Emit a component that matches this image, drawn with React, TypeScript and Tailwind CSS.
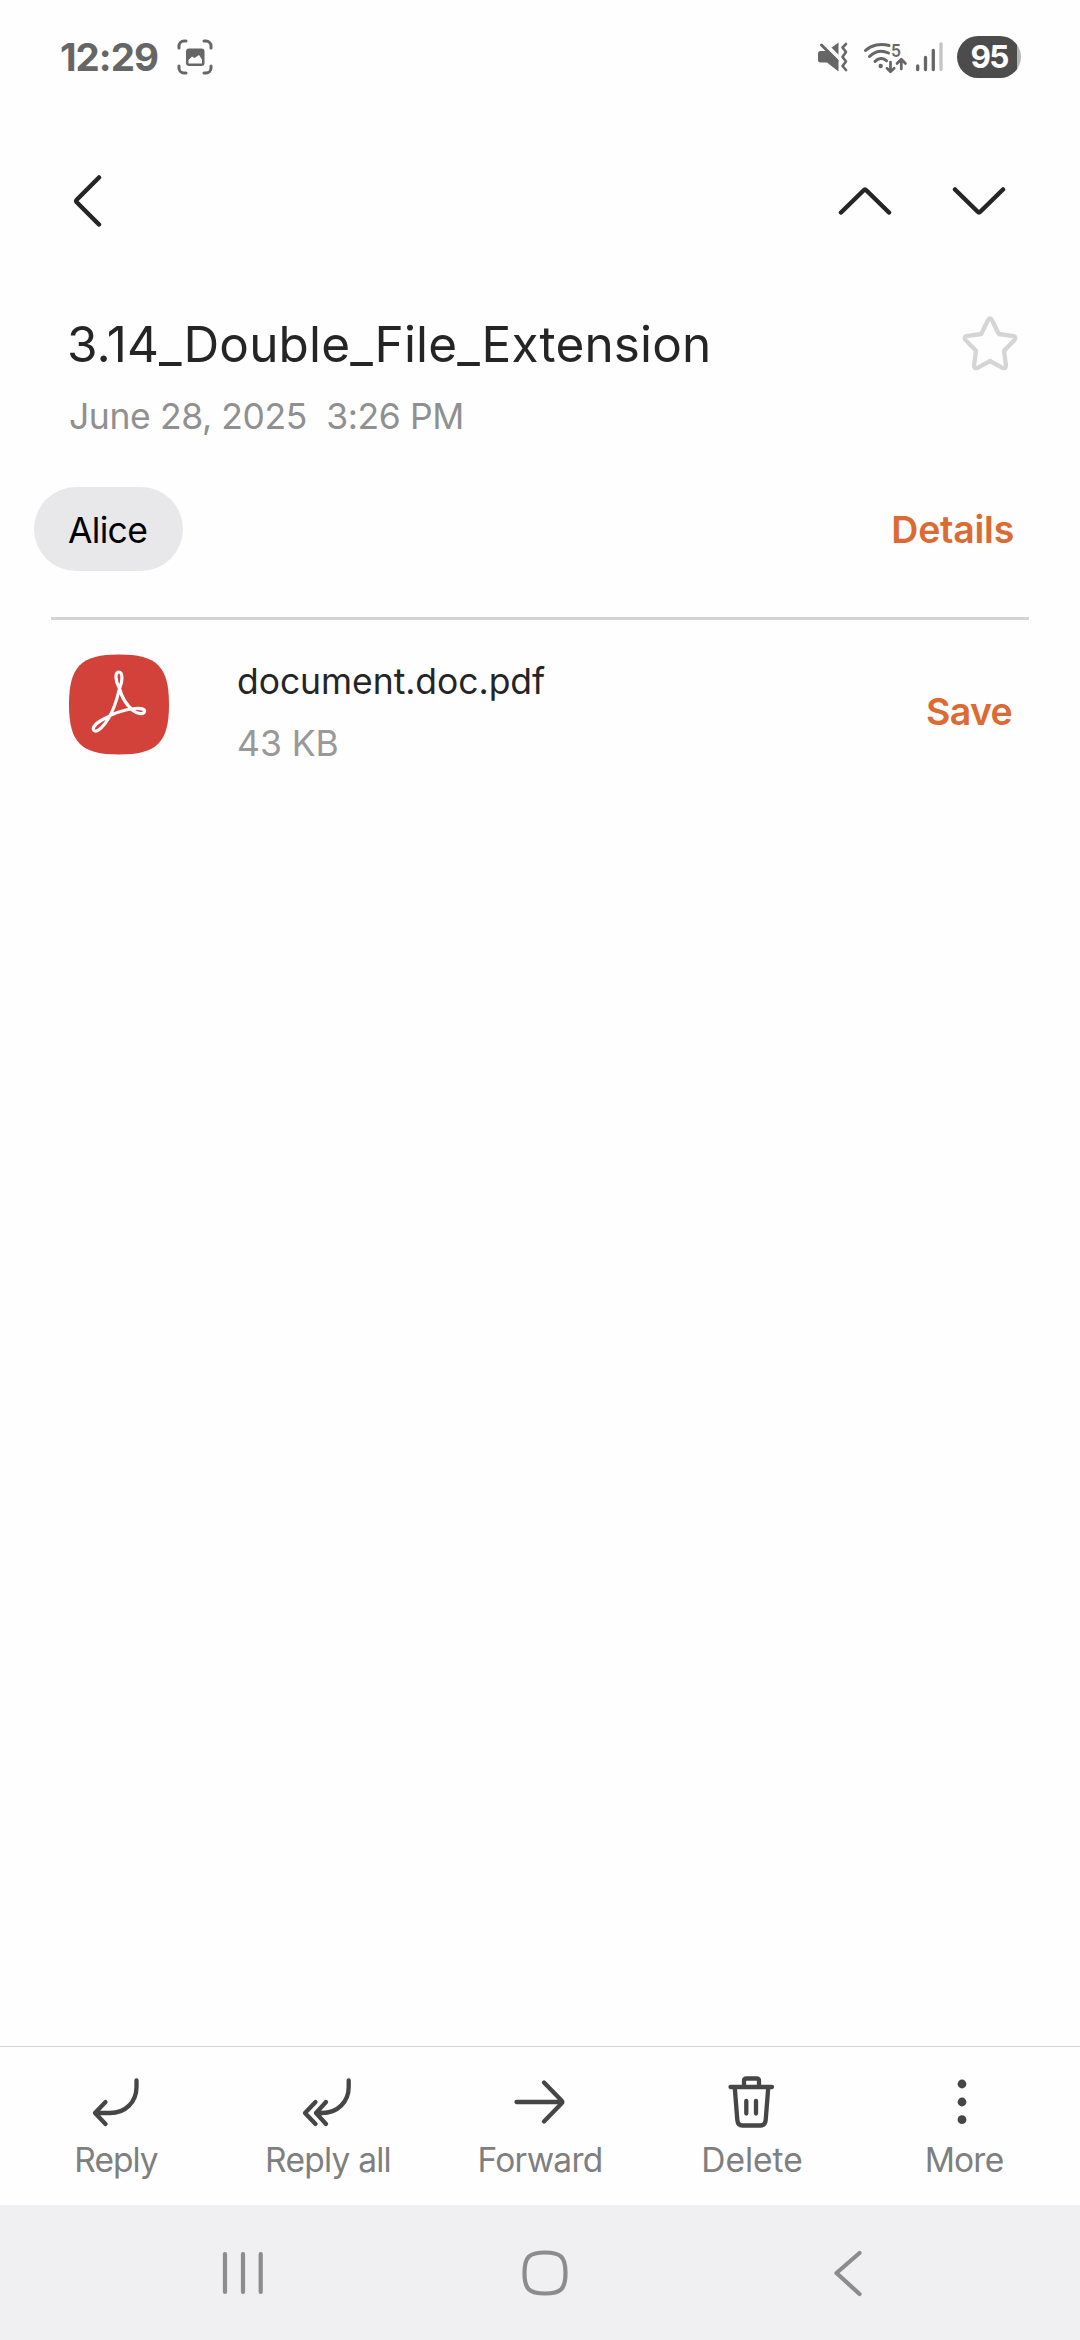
import type { ReactNode } from 'react';

function StatusBar() {
  return (
    <div className="flex h-[114px] items-center pr-[59px] pl-[60px] text-[#666666]">
      <span className="w-[117px] text-[38.5px] leading-none font-bold tracking-[-1px]">12:29</span>
      <svg width="36" height="36" viewBox="0 0 36 36" fill="none">
        <path
          d="M2 9V7a5 5 0 0 1 5-5h2M27 2h2a5 5 0 0 1 5 5v2M34 27v2a5 5 0 0 1-5 5h-2M9 34H7a5 5 0 0 1-5-5v-2"
          stroke="currentColor"
          strokeWidth="3"
          strokeLinecap="round"
        />
        <rect x="9" y="9.5" width="18.5" height="17.5" rx="3" fill="currentColor" />
        <path d="M11.5 24.5v-3.5l3.5-3.5 2.5 1.5 4.5-3 3 4.5v4z" fill="#fefefe" />
      </svg>
      <div className="ml-auto flex items-center">
        <svg width="34" height="34" viewBox="816 40 34 34" fill="none" className="mr-3">
          <path d="M820.5 51H827L838.5 42.5V71.5L827 62.5H820.5Q818 62.5 818 60V53.5Q818 51 820.5 51Z" fill="currentColor" />
          <path d="M821 40L840 59" stroke="#fefefe" strokeWidth="4" />
          <path d="M821.5 45L837 60.5" stroke="currentColor" strokeWidth="3" strokeLinecap="round" />
          <path
            d="M846 44l-3.5 3.5 3.5 4.5-3.5 5 3.5 4.5-3.5 4.5 3.5 4"
            stroke="currentColor"
            strokeWidth="2.6"
            strokeLinecap="round"
            strokeLinejoin="round"
          />
        </svg>
        <svg width="46" height="34" viewBox="862 40 46 34" fill="none" className="mr-[7px]">
          <g stroke="currentColor" strokeWidth="3" strokeLinecap="round" strokeLinejoin="round">
            <path d="M865.5 50.5C871 45 881 43 889 45.5" />
            <path d="M869.5 56.5C875 51 882 50 888.5 53" />
            <path d="M875 61.5C878 58 883.5 57.5 886.5 60.8" />
            <path d="M890.5 62V71.5M887 68.3L890.5 71.8L894.2 68.3" strokeWidth="2.7" />
            <path d="M901.3 69V59.5M897 63.5L901.3 59.2L905.5 63.5" strokeWidth="2.7" />
          </g>
          <circle cx="880.7" cy="66" r="2.2" fill="currentColor" />
          <text x="891" y="56.5" fontSize="17.5" fontWeight="600" textLength="10" lengthAdjust="spacingAndGlyphs" fill="currentColor">
            5
          </text>
        </svg>
        <svg width="29" height="34" viewBox="915 40 29 34" fill="none" className="mr-[13px]" strokeWidth="3.3" strokeLinecap="round">
          <path d="M917.7 66V69.5M925.5 57.5V69.5M933.3 50.5V69.5" stroke="currentColor" />
          <path d="M941 43.8V69.5" stroke="#c4c4c4" />
        </svg>
        <div className="flex h-[42px] w-16 items-center justify-center rounded-full bg-[linear-gradient(to_right,#4c4c4c_60px,#b5b5b5_60px)]">
          <span className="text-[31.5px] leading-none font-bold tracking-[-1.8px] text-white">95</span>
        </div>
      </div>
    </div>
  );
}

function Chevron({ d, w, h, className }: { d: string; w: number; h: number; className?: string }) {
  return (
    <svg
      width={w}
      height={h}
      viewBox={`0 0 ${w} ${h}`}
      fill="none"
      stroke="#252525"
      strokeWidth="4.5"
      strokeLinecap="round"
      strokeLinejoin="round"
      className={className}
    >
      <path d={d} />
    </svg>
  );
}

function TopNav() {
  return (
    <div className="flex h-[174px] items-center pr-[74px] pl-[72px]">
      <Chevron w={30} h={54} d="M27 3.5L5 25.5Q3.5 27 5 28.5L27 50.5" />
      <Chevron w={54} h={30} d="M3 26.5L25.5 4.5Q27 3 28.5 4.5L51 26.5" className="ml-auto" />
      <Chevron w={54} h={30} d="M3 3.5L25.5 25.5Q27 27 28.5 25.5L51 3.5" className="ml-[60px]" />
    </div>
  );
}

function AcrobatIcon() {
  return (
    <svg width="100" height="101" viewBox="0 0 100 100" fill="none" className="ml-[0.5px]">
      <path d="M50 0C88 0 100 12 100 50S88 100 50 100S0 88 0 50S12 0 50 0Z" fill="#d3423a" />
      <path
        d="M50.5 34C45.8 26 46 17.5 49.8 17.5C53.8 17.5 54 26 50.5 34C48 45 43 58 40 63C35 72 29 77 26 76.5C22 75.5 25 70 32 66C42 60 54 55 66 54C72 53.5 76 54.5 75.5 57C75 60 69 60 64 56C57 50 52.5 42 50.5 34Z"
        stroke="#fff"
        strokeWidth="3.2"
        strokeLinejoin="round"
      />
    </svg>
  );
}

function Action({ label, tracking, children }: { label: string; tracking: string; children: ReactNode }) {
  return (
    <div className="flex w-[212px] flex-col items-center pt-6">
      <svg
        width="60"
        height="60"
        viewBox="0 0 60 60"
        fill="none"
        stroke="#464646"
        strokeWidth="4.3"
        strokeLinecap="round"
        strokeLinejoin="round"
      >
        {children}
      </svg>
      <span className={`mt-[9px] text-[33.5px] leading-10 text-[#7f7f7f] ${tracking}`}>{label}</span>
    </div>
  );
}

function NavButton({ d }: { d: string }) {
  return (
    <svg
      width="48"
      height="48"
      viewBox="0 0 48 48"
      fill="none"
      stroke="#8c8c8c"
      strokeWidth="4.2"
      strokeLinecap="round"
      strokeLinejoin="round"
    >
      <path d={d} />
    </svg>
  );
}

export default function App() {
  return (
    <div className="flex h-[2340px] w-[1080px] flex-col bg-[#fefefe] font-['Inter',sans-serif]">
      <StatusBar />
      <TopNav />

      <div className="flex h-28 items-center justify-between pr-[61px] pl-[67px]">
        <h1 className="pt-0.5 text-[49.5px] leading-none tracking-[0.14px] text-[#252525]">3.14_Double_File_Extension</h1>
        <svg width="58" height="58" viewBox="0 0 58 58" fill="none" stroke="#d5d5d5" strokeWidth="4.3" strokeLinejoin="round">
          <path d="M26.8 5.5Q29 1.5 31.2 5.5L37.8 19L52.5 21.2Q55.5 22 53.5 25L43 35.7L45 50.5Q44.8 54.2 41.5 52.8L29 46L16.5 52.8Q13.2 54.2 13 50.5L15 35.7L4.5 25Q2.5 22 5.5 21.2L20.2 19Z" />
        </svg>
      </div>
      <div className="h-8 pl-[69px] text-[35.5px] leading-[34px] tracking-[-0.4px] whitespace-pre text-[#909090]">
        June 28, 2025  3:26 PM
      </div>

      <div className="mt-[55px] flex h-[84px] items-center justify-between pr-[66px] pl-[34px]">
        <span className="flex h-[84px] w-[149px] items-center rounded-full bg-[#e8e8ea] pt-[3px] pl-[34px] text-[35.5px] leading-none tracking-[-0.69px] text-black">
          Alice
        </span>
        <span className="pt-px text-[37.5px] leading-none font-semibold tracking-[-0.25px] text-[#dc6a33]">Details</span>
      </div>

      <div className="mx-[51px] mt-[46px] h-[3px] bg-[#d4d4d4]" />

      <div className="flex pt-[34px] pr-[68px] pl-[68px]">
        <AcrobatIcon />
        <div className="ml-[68.5px] flex flex-col pt-[5px]">
          <span className="h-[46px] text-[35.5px] leading-[46px] tracking-[-0.06px] text-[#252525]">document.doc.pdf</span>
          <span className="mt-4 h-[46px] text-[35.5px] leading-[46px] tracking-[-0.05px] text-[#999999]">43 KB</span>
        </div>
        <span className="mt-[35px] ml-auto h-[46px] text-[37.5px] leading-[46px] font-semibold tracking-[-0.7px] text-[#dc6a33]">
          Save
        </span>
      </div>

      <div className="mt-auto flex h-[159px] border-t border-[#d4d4d4] px-[10px]">
        <Action label="Reply" tracking="tracking-[-0.97px]">
          <path d="M19.5 31L9 42L19.5 53M9 42H24C39.5 42 50.5 31 50.5 16V9.5" />
        </Action>
        <Action label="Reply all" tracking="tracking-[-0.76px]">
          <path d="M17.5 31L7 42L17.5 53M28 31L18 42L28 53M18 42H24C39.5 42 50.7 31 50.7 16V9.5" />
        </Action>
        <Action label="Forward" tracking="tracking-[-0.75px]">
          <path d="M6.5 31H52M34 11.5L51.5 29.5Q53 31 51.5 32.5L34 50.5" />
        </Action>
        <Action label="Delete" tracking="tracking-[0px]">
          <path d="M8.5 16H50M22 15V10Q22 7.5 24.5 7.5H34.5Q37 7.5 37 10V15M12.8 17L15.3 49Q15.8 54.5 20.5 54.5H38.5Q43.2 54.5 43.7 49L46.2 17M24.3 30V42.5M34 30V42.5" />
        </Action>
        <Action label="More" tracking="tracking-[-0.8px]">
          <g fill="#464646" stroke="none">
            <circle cx="28" cy="13" r="4.4" />
            <circle cx="28" cy="31" r="4.4" />
            <circle cx="28" cy="48.7" r="4.4" />
          </g>
        </Action>
      </div>

      <div className="flex h-[135px] items-center gap-[254px] bg-[#f0f0f2] pl-[219px]">
        <NavButton d="M6 5V43M24 5V43M41.7 5V43" />
        <NavButton d="M24 3.500C40 3.500 44.500 8 44.500 24S40 44.500 24 44.500S3.500 40 3.500 24S8 3.500 24 3.500Z" />
        <NavButton d="M36.500 4L13.500 24L36.500 45" />
      </div>
    </div>
  );
}
